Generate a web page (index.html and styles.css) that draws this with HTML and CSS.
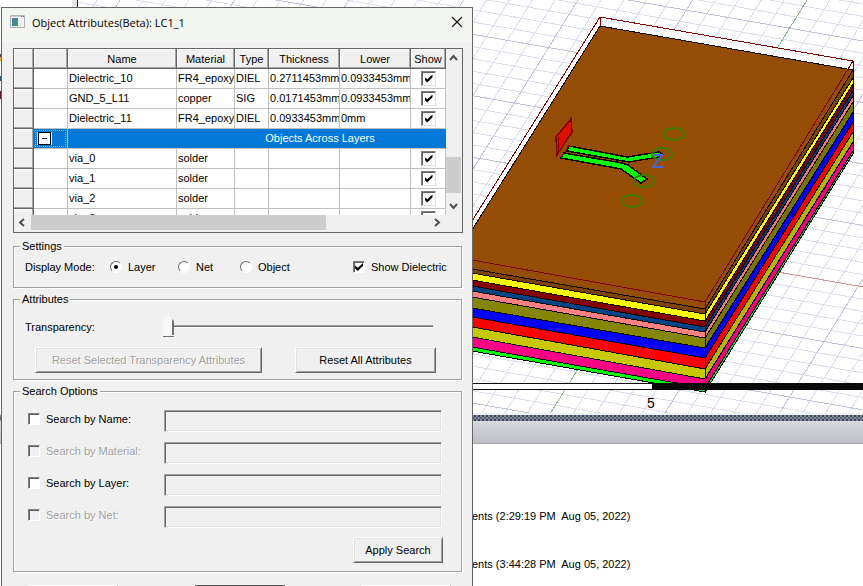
FILE: index.html
```
<!DOCTYPE html>
<html lang="en">
<head>
<meta charset="utf-8">
<title>Object Attributes(Beta): LC1_1</title>
<link rel="stylesheet" href="styles.css">
</head>
<body>
<main class="app">
  <section class="workspace">
    <div class="tree">
      <svg width="2" height="120" viewBox="0 0 2 120" aria-hidden="true">
        <path d="M0 54h2v3h-2z" fill="#444"/><path d="M0 57h2v4h-2z" fill="#e8b030"/>
        <path d="M0 76h1v5h-1z" fill="#35507a"/><path d="M0 91h2v8h-2z" fill="#6a1030"/>
      </svg>
    </div>
    <div class="tree-edge"></div>
    <div class="viewport">
      <svg class="scene" viewBox="78 0 785 413" preserveAspectRatio="xMinYMin slice" role="img" aria-label="Layer stackup">
        <g transform="matrix(20.66 3.61 -6.89 11.09 651.8 250)" fill="none">
          <path class="minor" d="M-32-24V23M-31-24V23M-29-24V23M-28-24V23M-27-24V23M-26-24V23M-24-24V23M-23-24V23M-22-24V23M-21-24V23M-19-24V23M-18-24V23M-17-24V23M-16-24V23M-14-24V23M-13-24V23M-12-24V23M-11-24V23M-9-24V23M-8-24V23M-7-24V23M-6-24V23M-4-24V23M-3-24V23M-2-24V23M-1-24V23M1-24V23M2-24V23M3-24V23M4-24V23M6-24V23M7-24V23M8-24V23M9-24V23M11-24V23M12-24V23M13-24V23"/>
          <path class="minor" d="M-34-24H15M-34-23H15M-34-22H15M-34-21H15M-34-19H15M-34-18H15M-34-17H15M-34-16H15M-34-14H15M-34-13H15M-34-12H15M-34-11H15M-34-9H15M-34-8H15M-34-7H15M-34-6H15M-34-4H15M-34-3H15M-34-2H15M-34-1H15M-34 1H15M-34 2H15M-34 3H15M-34 4H15M-34 6H15M-34 7H15M-34 8H15M-34 9H15M-34 11H15M-34 12H15M-34 13H15M-34 14H15M-34 16H15M-34 17H15M-34 18H15M-34 19H15M-34 21H15M-34 22H15"/>
          <path class="major" d="M-30-24V23M-25-24V23M-20-24V23M-15-24V23M-10-24V23M-5-24V23M5-24V23M10-24V23M-34-20H15M-34-15H15M-34-10H15M-34-5H15M-34 5H15M-34 10H15M-34 15H15M-34 20H15"/>
          <path class="axis-y" d="M0-24V23"/>
          <path class="axis-x" d="M-34 0H15"/>
        </g>
        <path d="M600 17L853 61V70L600 26L472 230V221Z" fill="#fff" fill-opacity=".6"/>
        <path d="M600 26L853 70L705 309L472 269L400 256V345Z" fill="#954c05"/>
        <g class="edge">
          <path fill="#7f4000" d="M400 256L472 269L705 309V314L472 273L400 260Z"/>
          <path fill="#ffff00" d="M400 260L472 273L705 314V321L472 280L400 267Z"/>
          <path fill="#850000" d="M400 267L472 280L705 321V327L472 286L400 273Z"/>
          <path fill="#004488" d="M400 273L472 286L705 327V332L472 291L400 278Z"/>
          <path fill="#ff8080" d="M400 278L472 291L705 332V338L472 297L400 284Z"/>
          <path fill="#858500" d="M400 284L472 297L705 338V348L472 308L400 295Z"/>
          <path fill="#0000ff" d="M400 295L472 308L705 348V358L472 317L400 304Z"/>
          <path fill="#ff0000" d="M400 304L472 317L705 358V369L472 327L400 314Z"/>
          <path fill="#c8c800" d="M400 314L472 327L705 369V379L472 337L400 324Z"/>
          <path fill="#ff0084" d="M400 324L472 337L705 379V388L472 347L400 334Z"/>
          <path fill="#00ff00" d="M400 334L472 347L705 388V392L472 351L400 338Z"/>
          <path fill="#7f4000" d="M705 309L853 70V78L705 314Z"/>
          <path fill="#ffff00" d="M705 314L853 78V84L705 321Z"/>
          <path fill="#750000" d="M705 321L853 84V91L705 327Z"/>
          <path fill="#003c78" d="M705 327L853 91V96L705 332Z"/>
          <path fill="#f07878" d="M705 332L853 96V102L705 338Z"/>
          <path fill="#757500" d="M705 338L853 102V112L705 348Z"/>
          <path fill="#0000f0" d="M705 348L853 112V122L705 358Z"/>
          <path fill="#f00000" d="M705 358L853 122V132L705 369Z"/>
          <path fill="#b4b400" d="M705 369L853 132V142L705 379Z"/>
          <path fill="#f00078" d="M705 379L853 142V151L705 388Z"/>
          <path fill="#00e828" d="M705 388L853 151V154L705 392Z"/>
          <path fill="none" d="M472 230L600 26L853 70"/>
        </g>
        <path class="outline" d="M472 221L600 17L853 61L705 302L472 260M600 17V26M853 61V70M705 302V309"/>
        <path d="M556 137L571 119L572 132L557 155Z" fill="#dd1100" stroke="#800000" stroke-width="1.5"/>
        <path d="M558 137V152M571 120V132" stroke="#800000"/>
        <g class="trace">
          <path d="M569 146L627 157L659 152L662 154L659 157L629 162L567 151Z"/>
          <path d="M564 153L622 163L628 165L647 179L641 183L621 169L561 158Z"/>
        </g>
        <path d="M566 150L569 145M561 158L564 153" stroke="#a00000"/>
        <g class="vias">
          <ellipse cx="674" cy="134" rx="10" ry="6"/>
          <ellipse cx="662" cy="154" rx="10" ry="6"/>
          <ellipse cx="644" cy="181" rx="10" ry="6"/>
          <ellipse cx="632" cy="201" rx="10" ry="6"/>
        </g>
        <path d="M653 155H662L653 167H663" fill="none" stroke="#4466dd" stroke-width="2" shape-rendering="auto"/>
        <path d="M400 383H652V390H400Z" fill="#fff"/>
        <path d="M400 383H652V384H400ZM400 389H652V390H400ZM652 383H900V390H652Z" fill="#0a0a0a"/>
        <text class="scale" x="647" y="408">5</text>
      </svg>
    </div>
  </section>
  <div class="splitter"></div>
  <div class="panel-bar"></div>
  <section class="messages">
    <p>ents (2:29:19 PM  Aug 05, 2022)</p>
    <p>ents (3:44:28 PM  Aug 05, 2022)</p>
  </section>
</main>

<form class="dialog" role="dialog" aria-labelledby="dialog-title">
  <header class="titlebar">
    <svg width="16" height="14" viewBox="0 0 16 14" aria-hidden="true">
      <defs><linearGradient id="pane" x1="0" y1="0" x2="1" y2="1"><stop offset="0" stop-color="#4a7fb8"/><stop offset="1" stop-color="#3f9a62"/></linearGradient></defs>
      <path d="M.5.5h14v12h-14z" fill="#f8f8f8" stroke="#b0b4b8"/><path d="M1 1h13v1H1z" fill="#c8ccd0"/>
      <path d="M2 3h6v8H2z" fill="url(#pane)"/><path d="M10 3h3v8h-3z" fill="#eceff1"/><path d="M11 1h1v1h-1zM13 1h1v1h-1z" fill="#4a70a0"/>
    </svg>
    <h1 id="dialog-title">Object Attributes(Beta): LC1_1</h1>
    <button class="close" type="button" aria-label="Close"><svg width="12" height="12" viewBox="0 0 12 12"><path d="M1 1L11 11M11 1L1 11" stroke="#111" stroke-width="1.1"/></svg></button>
  </header>

  <div class="content">
    <div class="grid">
      <div class="grid-view">
        <table>
          <colgroup><col class="c-row"><col class="c-group"><col class="c-name"><col class="c-mat"><col class="c-type"><col class="c-dim"><col class="c-dim"><col class="c-show"><col class="c-more"></colgroup>
          <thead><tr><th></th><th></th><th>Name</th><th>Material</th><th>Type</th><th>Thickness</th><th>Lower</th><th>Show</th><th></th></tr></thead>
          <tbody>
            <tr><th></th><td></td><td>Dielectric_10</td><td>FR4_epoxy</td><td>DIEL</td><td>0.2711453mm</td><td>0.0933453mm</td><td class="show"><input type="checkbox" class="check large" aria-label="Show Dielectric_10" checked></td><td></td></tr>
            <tr><th></th><td></td><td>GND_5_L11</td><td>copper</td><td>SIG</td><td>0.0171453mm</td><td>0.0933453mm</td><td class="show"><input type="checkbox" class="check large" aria-label="Show GND_5_L11" checked></td><td></td></tr>
            <tr><th></th><td></td><td>Dielectric_11</td><td>FR4_epoxy</td><td>DIEL</td><td>0.0933453mm</td><td>0mm</td><td class="show"><input type="checkbox" class="check large" aria-label="Show Dielectric_11" checked></td><td></td></tr>
            <tr class="group"><th></th><td class="toggle-cell"><div class="focus"><button class="toggle" type="button" aria-label="Collapse"></button></div></td><td colspan="7">Objects Across Layers</td></tr>
            <tr><th></th><td></td><td>via_0</td><td>solder</td><td></td><td></td><td></td><td class="show"><input type="checkbox" class="check large" aria-label="Show via_0" checked></td><td></td></tr>
            <tr><th></th><td></td><td>via_1</td><td>solder</td><td></td><td></td><td></td><td class="show"><input type="checkbox" class="check large" aria-label="Show via_1" checked></td><td></td></tr>
            <tr><th></th><td></td><td>via_2</td><td>solder</td><td></td><td></td><td></td><td class="show"><input type="checkbox" class="check large" aria-label="Show via_2" checked></td><td></td></tr>
            <tr><th></th><td></td><td>via_3</td><td>solder</td><td></td><td></td><td></td><td class="show"><input type="checkbox" class="check large" aria-label="Show via_3" checked></td><td></td></tr>
          </tbody>
        </table>
      </div>
      <div class="bar vertical">
        <svg width="15" height="17" viewBox="0 0 15 17"><path d="M4 11L7.500 7L11 11" class="chevron"/></svg>
        <div class="thumb"></div>
        <svg width="15" height="17" viewBox="0 0 15 17"><path d="M4 6L7.500 10L11 6" class="chevron"/></svg>
      </div>
      <div class="bar horizontal">
        <svg width="17" height="15" viewBox="0 0 17 15"><path d="M10 4L6 7.500L10 11" class="chevron"/></svg>
        <div class="thumb"></div>
        <svg width="17" height="15" viewBox="0 0 17 15"><path d="M6 4L10 7.500L6 11" class="chevron"/></svg>
      </div>
    </div>

    <fieldset>
      <legend>Settings</legend>
      <div class="settings">
        <span>Display Mode:</span>
        <label><input type="radio" name="mode" class="radio" checked>Layer</label>
        <label><input type="radio" name="mode" class="radio">Net</label>
        <label><input type="radio" name="mode" class="radio">Object</label>
        <label><input type="checkbox" class="check" checked>Show Dielectric</label>
      </div>
    </fieldset>

    <fieldset>
      <legend>Attributes</legend>
      <div class="transparency">
        <label for="transparency">Transparency:</label>
        <input id="transparency" type="range" min="0" max="100" value="0">
      </div>
      <div class="resets">
        <button class="btn" type="button" disabled>Reset Selected Transparency Attributes</button>
        <button class="btn" type="button">Reset All Attributes</button>
      </div>
    </fieldset>

    <fieldset>
      <legend>Search Options</legend>
      <div class="search">
        <label><input type="checkbox" class="check">Search by Name:</label><input type="text" class="field" aria-label="Name" disabled>
        <label class="off"><input type="checkbox" class="check" disabled>Search by Material:</label><input type="text" class="field" aria-label="Material" disabled>
        <label><input type="checkbox" class="check">Search by Layer:</label><input type="text" class="field" aria-label="Layer" disabled>
        <label class="off"><input type="checkbox" class="check" disabled>Search by Net:</label><input type="text" class="field" aria-label="Net" disabled>
      </div>
      <div class="apply"><button class="btn" type="button">Apply Search</button></div>
    </fieldset>

    <footer class="actions">
      <button class="btn" type="button" aria-label="Apply"></button>
      <button class="btn default" type="button" aria-label="OK"></button>
      <button class="btn" type="button" aria-label="Cancel"></button>
    </footer>
  </div>
</form>
</body>
</html>
```
FILE: styles.css
```
* { box-sizing: border-box; }

body {
  margin: 0;
  height: 100vh;
  overflow: hidden;
  background: #fff;
  color: #000;
  font: 11px/14px "Liberation Sans", Arial, sans-serif;
}

button, input { font: inherit; color: inherit; margin: 0; padding: 0; }

/* Main window behind the dialog */
.app { display: flex; flex-direction: column; height: 100%; }
.workspace { display: flex; flex: 0 0 413px; }
.tree { width: 72px; }
.tree-edge { width: 6px; background: #e4e4e8; border-right: 1px solid #222; }
.viewport { flex: 1; min-width: 0; overflow: hidden; }
.scene { display: block; width: 100%; height: 100%; shape-rendering: crispEdges; }
.minor, .major, .axis-x, .axis-y { vector-effect: non-scaling-stroke; stroke-width: 1; }
.minor { stroke: #dcdcec; }
.major { stroke: #c2c2de; }
.axis-x { stroke: #e09090; }
.axis-y { stroke: #90b890; }
.edge { stroke: #000; stroke-width: 1; }
.outline { fill: none; stroke: #800000; }
.trace { fill: #00ff00; stroke: #000; stroke-width: 1.5; }
.vias { fill: none; stroke: #3f7a00; stroke-width: 2; shape-rendering: auto; }
.scale { font: 14px "Liberation Sans", Arial, sans-serif; }

.splitter {
  height: 8px;
  flex: none;
  border-top: 2px solid #f0f0f0;
  background: conic-gradient(#36466e 25%, #85888a 0 50%, #5a6478 0 75%, #85888a 0) 0 0 / 4px 4px;
}
.panel-bar { flex: none; height: 23px; background: linear-gradient(#d6dade, #bcc0c4); border-bottom: 1px solid #aaa; }
.messages { flex: 1; padding: 65px 0 0 472px; }
.messages p { margin: 0 0 34px; white-space: pre; }

/* Dialog */
.dialog {
  position: absolute;
  top: 7px;
  left: 1px;
  width: 472px;
  border: 1px solid #666;
  background: #f0f0f0;
}
.titlebar { display: flex; align-items: center; height: 34px; padding: 0 8px; gap: 6px; background: #f3f5f1; }
.titlebar > svg { margin-bottom: 6px; }
.titlebar h1 { flex: 1; margin: 0 0 4px; font: 11px/16px "Open Sans", "Noto Sans", sans-serif; }
.close { width: 14px; height: 14px; margin-bottom: 6px; border: 0; background: none; display: grid; place-items: center; }
.content { padding: 6px 9px 0 11px; }

/* Layer table */
.grid {
  display: grid;
  grid-template: 166px 17px / 1fr 16px;
  border: 1px solid #666;
  background: #f0f0f0;
  margin-bottom: 7px;
}
.grid-view { overflow: hidden; background: #fff; }
table { width: 558px; table-layout: fixed; border-collapse: separate; border-spacing: 0; }
.c-row { width: 20px; }
.c-group { width: 34px; }
.c-name { width: 109px; }
.c-mat { width: 58px; }
.c-type { width: 34px; }
.c-dim { width: 71px; }
.c-show { width: 35px; }
.c-more { width: 126px; }
tr { height: 20px; }
th, td { height: 20px; padding: 0 0 2px 1px; white-space: nowrap; overflow: hidden; text-align: left; font-weight: normal; border: 0 solid #c0c0c0; border-width: 0 1px 1px 0; }
th { background: #f0f0f0; border-color: #666; box-shadow: inset -1px -1px #a8a8a8, inset 1px 1px #fff; }
thead th { padding: 0; text-align: center; }
td.show { padding: 0 0 0 1px; text-align: center; }
.show .check { margin: 0 auto; }
.group td { background: #0078d7; color: #fff; text-align: center; }
.group td.toggle-cell { padding: 1px; }
.focus { display: flex; height: 17px; padding: 1px; border: 1px dotted #e8a060; }
.toggle { width: 15px; height: 13px; border: 0; background: #f0f0f0; display: grid; place-items: center; }
.toggle::before { content: ""; width: 11px; height: 11px; border: 1px solid #000; background: linear-gradient(#202020, #202020) center / 5px 1px no-repeat #fff; }

.bar { display: flex; background: #f0f0f0; }
.bar .thumb { background: #cdcdcd; }
.chevron { fill: none; stroke: #505050; stroke-width: 2; }
.vertical { flex-direction: column; }
.vertical .thumb { width: 15px; height: 36px; margin: auto 0 5px; }
.horizontal .thumb { width: 295px; height: 15px; margin-right: auto; }

/* Groups */
fieldset { min-width: 0; margin: 0 1px 5px 0; padding: 0 18px 0 11px; border: 1px solid #a0a0a0; box-shadow: 1px 1px #fff, inset 1px 1px #fff; }
legend { margin-left: -5px; padding: 0 2px; line-height: 13px; background: #f0f0f0; }
.settings { display: grid; grid-template-columns: 85px 68px 62px 113px auto; align-items: center; height: 34px; padding-bottom: 6px; margin-right: -12px; }
label { display: flex; align-items: center; gap: 6px; white-space: nowrap; }

.check, .radio { appearance: none; flex: none; display: grid; place-items: center; width: 12px; height: 12px; background: #fff; border: 1px solid; border-color: #808080 #fff #fff #808080; box-shadow: inset 1px 1px #606060; }
.check.large { width: 15px; height: 15px; border-color: #808080 #e0e0e0 #e0e0e0 #808080; }
.check:checked::before { content: ""; width: 8px; height: 8px; background: #000; clip-path: polygon(0 30%, 35% 60%, 100% 0, 100% 35%, 35% 100%, 0 65%); }
.check:disabled { background: #f0f0f0; }
.radio { border-radius: 50%; border-color: #707070 #fff #fff #707070; box-shadow: none; }
.radio:checked::before { content: ""; width: 4px; height: 4px; border-radius: 50%; background: #000; }

.transparency { display: grid; grid-template-columns: 138px 1fr; align-items: center; height: 41px; margin-right: 10px; }
input[type="range"] { appearance: none; width: 100%; height: 24px; background: none; }
input[type="range"]::-webkit-slider-runnable-track { height: 3px; background: #707070; border-top: 1px solid #a0a0a0; border-bottom: 1px solid #fff; }
input[type="range"]::-webkit-slider-thumb {
  appearance: none;
  width: 11px;
  height: 22px;
  margin-top: -11px;
  background: linear-gradient(#707070, #707070) right / 2px 17px no-repeat, linear-gradient(#707070, #707070) bottom / 100% 1px no-repeat, linear-gradient(45deg, #f8f8f8 84%, #707070 86%);
  clip-path: polygon(0 5px, 5px 0, 11px 6px, 11px 100%, 0 100%);
}

.btn { height: 26px; background: #f0f0f0; border: 1px solid; border-color: #fff #666 #666 #fff; box-shadow: inset 1px 1px #e2e2e2, inset -1px -1px #a0a0a0; }
.btn:disabled { color: #a0a0a0; text-shadow: 1px 1px #fff; }
.resets { display: grid; grid-template-columns: 227px 141px; justify-content: space-between; margin-left: 10px; margin-right: 7px; padding-bottom: 6px; }

.search { display: grid; grid-template-columns: 136px 1fr; gap: 10px 0; align-items: start; padding: 12px 1px 0 3px; }
.search label { height: 18px; }
.off { color: #a0a0a0; text-shadow: 1px 1px #fff; }
.field { width: 100%; height: 22px; background: #f0f0f0; border: 1px solid; border-color: #a0a0a0 #fff #fff #a0a0a0; box-shadow: inset 1px 1px #696969, inset -1px -1px #e3e3e3; }
.apply { display: flex; justify-content: flex-end; padding: 9px 0 8px; }
.apply .btn { width: 90px; }
.actions { display: flex; justify-content: space-between; padding: 8px 12px 0 15px; }
.actions .btn { width: 90px; }
.actions .default { border-color: #555; }
```
